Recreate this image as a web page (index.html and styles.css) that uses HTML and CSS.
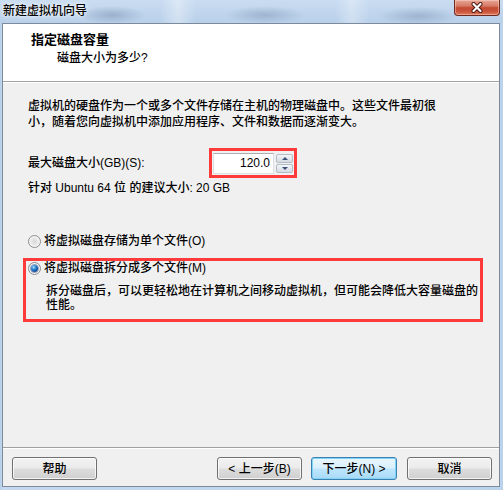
FILE: index.html
```html
<!DOCTYPE html>
<html lang="zh-CN">
<head>
<meta charset="utf-8">
<title>新建虚拟机向导</title>
<link rel="stylesheet" href="styles.css">
</head>
<body>
<div class="window">
  <div class="titlebar">
    <span class="title">新建虚拟机向导</span>
    <div class="close">
      <svg width="14" height="11" viewBox="0 0 14 11">
        <path d="M3.5 2 L10.5 9 M10.5 2 L3.5 9" stroke="#4a140c" stroke-width="4" stroke-linecap="round"/>
        <path d="M3.5 2 L10.5 9 M10.5 2 L3.5 9" stroke="#ffffff" stroke-width="2.2" stroke-linecap="round"/>
      </svg>
    </div>
  </div>
  <div class="client">
    <div class="header">
      <div class="h-title">指定磁盘容量</div>
      <div class="h-sub">磁盘大小为多少?</div>
    </div>
    <div class="content">
      <p class="desc">虚拟机的硬盘作为一个或多个文件存储在主机的物理磁盘中。这些文件最初很<br>小，随着您向虚拟机中添加应用程序、文件和数据而逐渐变大。</p>
      <div class="size-row">
        <span class="size-label">最大磁盘大小(GB)(S):</span>
        <div class="hl spin-wrap">
          <div class="spin-input">120.0</div>
          <div class="spin-btns">
            <div class="spin-btn"><span class="arrow-up"></span></div>
            <div class="spin-btn"><span class="arrow-down"></span></div>
          </div>
        </div>
      </div>
      <div class="rec">针对 Ubuntu 64 位 的建议大小: 20 GB</div>
      <div class="radio-row r1"><span class="radio"></span><span>将虚拟磁盘存储为单个文件(O)</span></div>
      <div class="hl split-box">
        <div class="radio-row r2"><span class="radio checked"></span><span>将虚拟磁盘拆分成多个文件(M)</span></div>
        <p class="split-desc">拆分磁盘后，可以更轻松地在计算机之间移动虚拟机，但可能会降低大容量磁盘的<br>性能。</p>
      </div>
    </div>
    <div class="footer">
      <button class="btn help">帮助</button>
      <button class="btn back">&lt; 上一步(B)</button>
      <button class="btn next default">下一步(N) &gt;</button>
      <button class="btn cancel">取消</button>
    </div>
  </div>
</div>
</body>
</html>
```

FILE: styles.css
```css
* { box-sizing: border-box; }
html, body {
  margin: 0;
  padding: 0;
  width: 503px;
  height: 490px;
  overflow: hidden;
}
body {
  font-family: "Liberation Sans", "Noto Sans CJK SC", sans-serif;
  font-size: 12px;
  font-weight: 500;
  color: #000;
}
.window {
  width: 503px;
  height: 490px;
  display: flex;
  flex-direction: column;
  background: linear-gradient(90deg, #b5cde8 0, #c4d9ef 2px, #bcd3ec 100%);
}
.titlebar {
  height: 23px;
  flex: none;
  display: flex;
  align-items: flex-start;
  background:
    radial-gradient(ellipse 34px 9px at 112px 15px, rgba(110,132,165,0.45), rgba(110,132,165,0) 100%),
    radial-gradient(ellipse 40px 9px at 265px 15px, rgba(110,132,165,0.40), rgba(110,132,165,0) 100%),
    radial-gradient(ellipse 40px 9px at 418px 16px, rgba(110,132,165,0.40), rgba(110,132,165,0) 100%),
    linear-gradient(90deg, rgba(255,255,255,0) 160px, rgba(255,255,255,0.35) 178px, rgba(255,255,255,0) 196px, rgba(255,255,255,0) 335px, rgba(255,255,255,0.3) 352px, rgba(255,255,255,0) 370px),
    linear-gradient(180deg, #c9dcf1 0, #b9d0ea 100%);
}
.title {
  padding-left: 3px;
  line-height: 22px;
  font-size: 12px;
  color: #000;
  text-shadow: 0 0 6px rgba(255,255,255,0.9), 0 0 3px rgba(255,255,255,0.9);
}
.close {
  margin-left: auto;
  margin-right: 3px;
  width: 46px;
  height: 16px;
  border: 1px solid #6e2a1e;
  border-top: none;
  border-radius: 0 0 4px 4px;
  background: linear-gradient(180deg, #e8a696 0, #d67a66 40%, #c44a33 52%, #c9533b 75%, #de7a5c 100%);
  box-shadow: inset 0 0 0 1px rgba(255,220,210,0.45);
  display: flex;
  align-items: center;
  justify-content: center;
}
.client {
  flex: 1;
  margin: 0 3px 3px 2px;
  border: 1px solid #7d8a9b;
  background: #f0f0f0;
  display: flex;
  flex-direction: column;
}
.header {
  height: 58px;
  flex: none;
  background: #fff;
  border-bottom: 1px solid #a0a0a0;
  padding: 8px 0 0 28px;
}
.h-title {
  font-weight: bold;
  font-size: 13px;
  line-height: 16px;
}
.h-sub {
  margin-top: 2px;
  margin-left: 26px;
  line-height: 16px;
}
.content {
  flex: 1;
  border-top: 1px solid #fff;
  padding: 0 0 0 25px;
}
.desc {
  margin: 15px 0 0 0;
  line-height: 16px;
}
.size-row {
  margin-top: 18px;
  display: flex;
  align-items: center;
  height: 30px;
}
.size-label {
  width: 181px;
  flex: none;
  line-height: 16px;
}
.hl {
  border: 3px solid #ff3a3a;
}
.spin-wrap {
  width: 88px;
  height: 30px;
  display: flex;
  padding: 2px 1px 1px 1px;
  gap: 2px;
}
.spin-input {
  width: 61px;
  height: 21px;
  background: #fff;
  border: 1px solid #dbdfe6;
  border-top-color: #abadb3;
  text-align: right;
  padding-right: 3px;
  line-height: 19px;
  font-size: 12px;
}
.spin-btns {
  width: 17px;
  height: 21px;
  display: flex;
  flex-direction: column;
  justify-content: space-between;
  padding: 1px 0 1px 0;
}
.spin-btn {
  height: 9px;
  border: 1px solid #b4bcc8;
  border-radius: 2px;
  background: linear-gradient(180deg, #f4f6f9 0, #e3e7ed 50%, #d5dbe3 100%);
  display: flex;
  align-items: center;
  justify-content: center;
}
.arrow-up {
  width: 0; height: 0;
  border-left: 3px solid transparent;
  border-right: 3px solid transparent;
  border-bottom: 3px solid #3c5078;
}
.arrow-down {
  width: 0; height: 0;
  border-left: 3px solid transparent;
  border-right: 3px solid transparent;
  border-top: 3px solid #3c5078;
}
.rec {
  margin-top: 2px;
  line-height: 16px;
}
.radio-row {
  display: flex;
  align-items: center;
  line-height: 16px;
}
.r1 {
  margin-top: 37px;
  height: 16px;
}
.radio {
  width: 13px;
  height: 13px;
  flex: none;
  border-radius: 50%;
  border: 1px solid #8a8c8e;
  background: radial-gradient(circle at 50% 50%, #d8d8d8 0, #e9e9e9 45%, #f6f6f6 100%);
  box-shadow: inset 0 0 0 1px #f7f7f7;
  margin-right: 3px;
  display: flex;
  align-items: center;
  justify-content: center;
}
.radio.checked::after {
  content: "";
  width: 7px;
  height: 7px;
  border-radius: 50%;
  background: radial-gradient(circle at 38% 32%, #b8e4ff 0, #3a94dc 28%, #175aab 60%, #0a3473 100%);
  box-shadow: 0 0 0 1px rgba(30,60,120,0.4);
}
.split-box {
  width: 460px;
  height: 64px;
  margin: 9px 0 0 -5px;
  padding: 0 0 0 2px;
}
.r2 {
  height: 14px;
  line-height: 14px;
}
.split-desc {
  margin: 9px 0 0 18px;
  line-height: 14px;
}
.footer {
  flex: none;
  height: 39px;
  border-top: 1px solid #a0a0a0;
  box-shadow: inset 0 1px 0 #fff;
  display: flex;
  align-items: flex-start;
  padding: 9px 7px 6px 9px;
}
.btn {
  width: 85px;
  height: 23px;
  font-family: "Liberation Sans", "Noto Sans CJK SC", sans-serif;
  font-size: 12px;
  font-weight: 500;
  color: #000;
  border: 1px solid #707070;
  border-radius: 3px;
  background: linear-gradient(180deg, #f2f2f2 0, #ebebeb 48%, #dddddd 52%, #cfcfcf 100%);
  box-shadow: inset 0 0 0 1px rgba(255,255,255,0.75);
  padding: 0;
  line-height: 20px;
}
.help { margin-right: auto; }
.back { margin-right: 9px; }
.next { margin-right: 10px; width: 86px; }
.default {
  border-color: #3c7fb1;
  background: linear-gradient(180deg, #eaf6fd 0, #d9f0fc 48%, #bee6fd 52%, #a7d9f5 100%);
  box-shadow: inset 0 0 0 1px #7fd4f8;
}
```
